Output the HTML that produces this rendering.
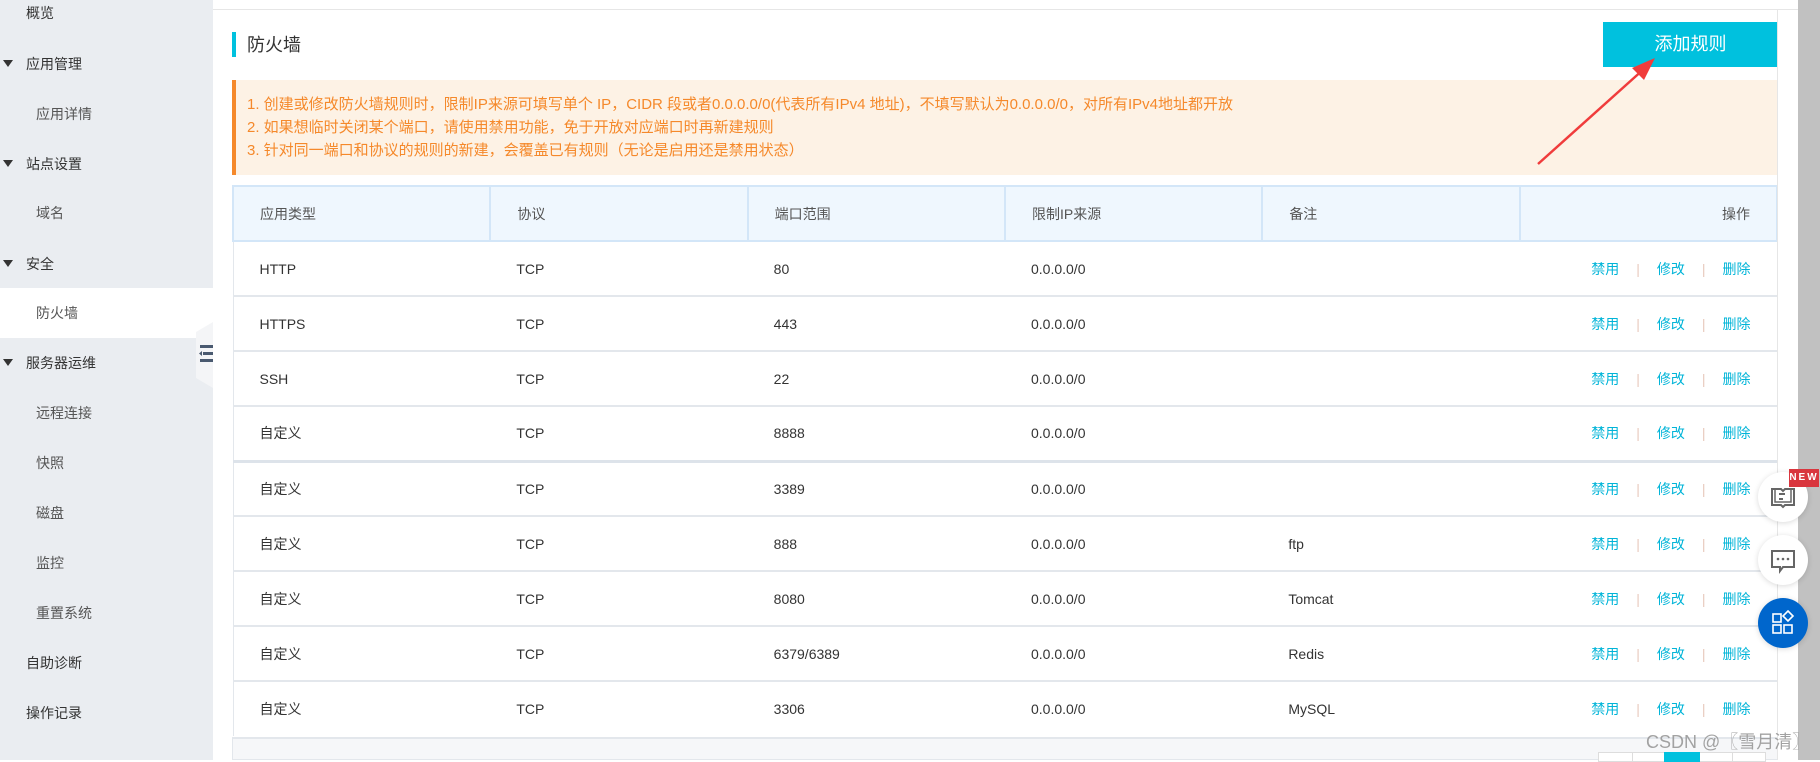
<!DOCTYPE html>
<html><head><meta charset="utf-8"><style>
*{margin:0;padding:0;box-sizing:border-box}
body{width:1820px;height:760px;overflow:hidden;background:#fff;font-family:"Liberation Sans","Noto Sans CJK SC",sans-serif;font-size:14px;color:#333;position:relative}
.sb{position:absolute;left:0;top:0;width:213px;height:760px;background:#eaedf1}
.si{position:absolute;left:0;width:213px;height:50px;line-height:50px;font-size:14px;color:#333}
.si.top{padding-left:26px}
.si.sub{padding-left:36px;color:#555}
.si.act{background:#fff}
.tri{position:absolute;left:3px;top:21px;width:0;height:0;border-left:5px solid transparent;border-right:5px solid transparent;border-top:7px solid #333}
.abs{position:absolute}
.hline{position:absolute;left:213px;right:22px;top:9px;height:1px;background:#e6e6e6}
.notice{position:absolute;left:232px;top:80px;width:1546px;height:95px;background:#fdf2e5;border-left:4px solid #f5892b;color:#f5892b;font-size:15px;padding:13px 0 0 11px;line-height:23px;white-space:nowrap}
table{position:absolute;left:232px;top:185px;width:1546px;border-collapse:collapse;table-layout:fixed}
th{height:55px;background:#eff7fe;border:2px solid #d3e6f8;font-weight:normal;text-align:left;padding-left:26px;color:#555}
td{height:55px;border-top:2px solid #e3e7ec;padding-left:26px;color:#333}
tr td:first-child{border-left:1px solid #e3e7ec}
tr td:last-child{border-right:1px solid #e3e7ec;text-align:right;padding-right:26px;color:#00b4d8}
.sep{color:#e8c9bd;margin:0 17px}
.circ{position:absolute;left:1758px;width:50px;height:50px;border-radius:50%;background:#fff;box-shadow:0 1px 6px rgba(0,0,0,.15)}
</style></head><body>
<div class="sb">
<div class="si top" style="top:-12px;padding-left:26px">概览</div>
<div class="si top" style="top:39px"><span class="tri"></span>应用管理</div>
<div class="si sub" style="top:89px">应用详情</div>
<div class="si top" style="top:139px"><span class="tri"></span>站点设置</div>
<div class="si sub" style="top:188px">域名</div>
<div class="si top" style="top:239px"><span class="tri"></span>安全</div>
<div class="si sub act" style="top:288px">防火墙</div>
<div class="si top" style="top:338px"><span class="tri"></span>服务器运维</div>
<div class="si sub" style="top:388px">远程连接</div>
<div class="si sub" style="top:438px">快照</div>
<div class="si sub" style="top:488px">磁盘</div>
<div class="si sub" style="top:538px">监控</div>
<div class="si sub" style="top:588px">重置系统</div>
<div class="si top" style="top:638px">自助诊断</div>
<div class="si top" style="top:688px">操作记录</div>
</div>
<svg class="abs" style="left:196px;top:322px" width="17" height="66"><polygon points="17,0 0,10 0,56 17,66" fill="#f4f5f7"/><rect x="4" y="23" width="13" height="3" fill="#4a5a70"/><rect x="7" y="30" width="10" height="3" fill="#4a5a70"/><rect x="4" y="37" width="13" height="3" fill="#4a5a70"/><polygon points="3,31.5 6,29 6,34" fill="#4a5a70"/></svg>
<div class="hline"></div>
<div class="abs" style="left:232px;top:32px;width:4px;height:25px;background:#00c1de"></div>
<div class="abs" style="left:247px;top:33px;font-size:18px;color:#333;line-height:24px">防火墙</div>
<div class="abs" style="left:1603px;top:22px;width:175px;height:45px;background:#00c1de;color:#fff;font-size:18px;text-align:center;line-height:45px">添加规则</div>
<div class="notice">1. 创建或修改防火墙规则时，限制IP来源可填写单个 IP，CIDR 段或者0.0.0.0/0(代表所有IPv4 地址)，不填写默认为0.0.0.0/0，对所有IPv4地址都开放<br>2. 如果想临时关闭某个端口，请使用禁用功能，免于开放对应端口时再新建规则<br>3. 针对同一端口和协议的规则的新建，会覆盖已有规则（无论是启用还是禁用状态）</div>
<svg class="abs" style="left:0;top:0" width="1820" height="760"><line x1="1538" y1="164" x2="1645" y2="68" stroke="#f03c3c" stroke-width="2.5"/><polygon points="1655,58 1632,68 1644,80" fill="#f03c3c"/></svg>
<table>
<tr><th>应用类型</th><th>协议</th><th>端口范围</th><th>限制IP来源</th><th>备注</th><th style="text-align:right;padding-right:26px">操作</th></tr>
<tr><td>HTTP</td><td>TCP</td><td>80</td><td>0.0.0.0/0</td><td></td><td>禁用<span class="sep">|</span>修改<span class="sep">|</span>删除</td></tr>
<tr><td>HTTPS</td><td>TCP</td><td>443</td><td>0.0.0.0/0</td><td></td><td>禁用<span class="sep">|</span>修改<span class="sep">|</span>删除</td></tr>
<tr><td>SSH</td><td>TCP</td><td>22</td><td>0.0.0.0/0</td><td></td><td>禁用<span class="sep">|</span>修改<span class="sep">|</span>删除</td></tr>
<tr><td>自定义</td><td>TCP</td><td>8888</td><td>0.0.0.0/0</td><td></td><td>禁用<span class="sep">|</span>修改<span class="sep">|</span>删除</td></tr>
<tr><td style="border-top:3px solid #dde3ea">自定义</td><td style="border-top:3px solid #dde3ea">TCP</td><td style="border-top:3px solid #dde3ea">3389</td><td style="border-top:3px solid #dde3ea">0.0.0.0/0</td><td style="border-top:3px solid #dde3ea"></td><td style="border-top:3px solid #dde3ea">禁用<span class="sep">|</span>修改<span class="sep">|</span>删除</td></tr>
<tr><td>自定义</td><td>TCP</td><td>888</td><td>0.0.0.0/0</td><td>ftp</td><td>禁用<span class="sep">|</span>修改<span class="sep">|</span>删除</td></tr>
<tr><td>自定义</td><td>TCP</td><td>8080</td><td>0.0.0.0/0</td><td>Tomcat</td><td>禁用<span class="sep">|</span>修改<span class="sep">|</span>删除</td></tr>
<tr><td>自定义</td><td>TCP</td><td>6379/6389</td><td>0.0.0.0/0</td><td>Redis</td><td>禁用<span class="sep">|</span>修改<span class="sep">|</span>删除</td></tr>
<tr><td>自定义</td><td>TCP</td><td>3306</td><td>0.0.0.0/0</td><td>MySQL</td><td>禁用<span class="sep">|</span>修改<span class="sep">|</span>删除</td></tr>
</table>
<div class="abs" style="left:232px;top:737px;width:1546px;height:23px;background:#f6f7f9;border:1px solid #e3e7ec;border-top:2px solid #e3e7ec"></div>
<div class="abs" style="left:1598px;top:752px;width:168px;height:10px;background:#fff;border:1px solid #ddd"></div>
<div class="abs" style="left:1664px;top:752px;width:36px;height:10px;background:#00c1de"></div>
<div class="abs" style="left:1632px;top:752px;width:1px;height:10px;background:#ddd"></div>
<div class="abs" style="left:1732px;top:752px;width:1px;height:10px;background:#ddd"></div>
<div class="abs" style="left:1777px;top:9px;width:1px;height:751px;background:#e6e6e6"></div>
<div class="abs" style="left:1798px;top:0;width:22px;height:760px;background:#c1c1c1"></div>
<div class="circ" style="top:472px"><svg width="50" height="50"><path d="M14 17v16h9l2 2 2-2h9V17h-9l-2 2-2-2z" fill="none" stroke="#666" stroke-width="2"/><path d="M17 17v13h8 8V17" fill="none" stroke="#666" stroke-width="1.5"/><rect x="21" y="21" width="6" height="2" fill="#666"/><rect x="21" y="26" width="4" height="2" fill="#666"/></svg></div>
<div class="abs" style="left:1789px;top:469px;width:30px;height:18px;background:#d9363e;color:#fff;font-size:10px;font-weight:bold;letter-spacing:2px;text-align:center;line-height:18px">NEW</div>
<div class="circ" style="top:535px"><svg width="50" height="50"><path d="M14 16h22v16h-11l-3 4v-4h-8z" fill="none" stroke="#666" stroke-width="2"/><circle cx="20" cy="24" r="1.3" fill="#666"/><circle cx="25" cy="24" r="1.3" fill="#666"/><circle cx="30" cy="24" r="1.3" fill="#666"/></svg></div>
<div class="circ" style="top:598px;background:#0066cc"><svg width="50" height="50"><rect x="15" y="16" width="8" height="8" fill="none" stroke="#fff" stroke-width="1.6"/><rect x="15" y="27" width="8" height="8" fill="none" stroke="#fff" stroke-width="1.6"/><rect x="26" y="27" width="8" height="8" fill="none" stroke="#fff" stroke-width="1.6"/><path d="M30 13l5 5-5 5-5-5z" fill="none" stroke="#fff" stroke-width="1.6"/></svg></div>
<div class="abs" style="left:1646px;top:728px;font-size:18px;color:#999;opacity:.9">CSDN @〖雪月清〗</div>
</body></html>
